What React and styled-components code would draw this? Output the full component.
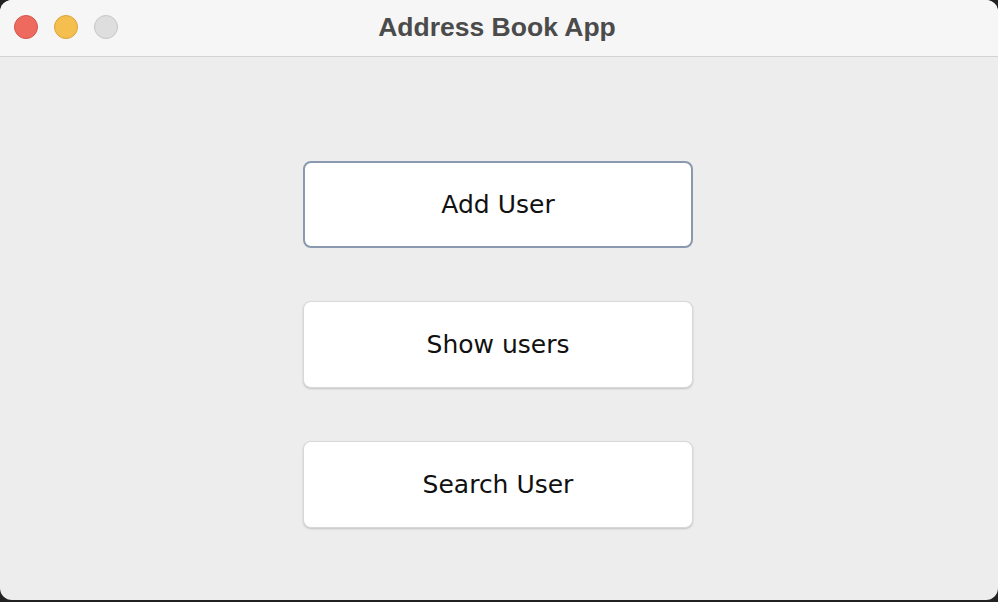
import React from 'react';
import styled, { createGlobalStyle } from 'styled-components';

const GlobalStyle = createGlobalStyle`
  html, body {
    margin: 0;
    padding: 0;
    background: #222222;
  }
  * {
    box-sizing: border-box;
  }
`;

const Window = styled.div`
  width: 998px;
  height: 600px;
  border-radius: 12px;
  overflow: hidden;
  background: #ededed;
  display: flex;
  flex-direction: column;
`;

const TitleBar = styled.div`
  position: relative;
  height: 57px;
  flex-shrink: 0;
  background: #f6f6f6;
  border-bottom: 1px solid #d3d3d3;
  display: flex;
  align-items: center;
  justify-content: center;
`;

const Lights = styled.div`
  position: absolute;
  left: 14px;
  top: 15px;
  display: flex;
  gap: 16px;
`;

const Light = styled.span`
  width: 24px;
  height: 24px;
  border-radius: 50%;
  background: ${p => p.color};
  border: 1px solid ${p => p.edge};
`;

const Title = styled.h1`
  margin: -2px 4px 0 0;
  font-family: "Liberation Sans", Arial, sans-serif;
  font-weight: bold;
  font-size: 26.5px;
  color: #4b4b4b;
`;

const Content = styled.div`
  flex: 1;
  display: flex;
  flex-direction: column;
  align-items: center;
  padding-top: 104px;
  padding-right: 2px;
  gap: 53px;
`;

const Button = styled.button`
  width: 390px;
  height: 87px;
  background: #ffffff;
  border-radius: 8px;
  font-family: "DejaVu Sans", "Open Sans", sans-serif;
  font-size: 25px;
  color: #111111;
  cursor: pointer;
  border: ${p => (p.focused ? '2px solid #8a99af' : '1px solid #d8d8d8')};
  box-shadow: ${p => (p.focused ? 'none' : '0 1px 2px rgba(0,0,0,0.18)')};
  padding: 0;
`;

const buttons = ['Add User', 'Show users', 'Search User'];

export default function App() {
  return (
    <>
      <GlobalStyle />
      <Window>
        <TitleBar>
          <Lights>
            <Light color="#ee6a5f" edge="#d65449" />
            <Light color="#f5bf4f" edge="#d9a33b" />
            <Light color="#dedede" edge="#c6c6c6" />
          </Lights>
          <Title>Address Book App</Title>
        </TitleBar>
        <Content>
          {buttons.map((label, i) => (
            <Button key={label} focused={i === 0}>{label}</Button>
          ))}
        </Content>
      </Window>
    </>
  );
}
